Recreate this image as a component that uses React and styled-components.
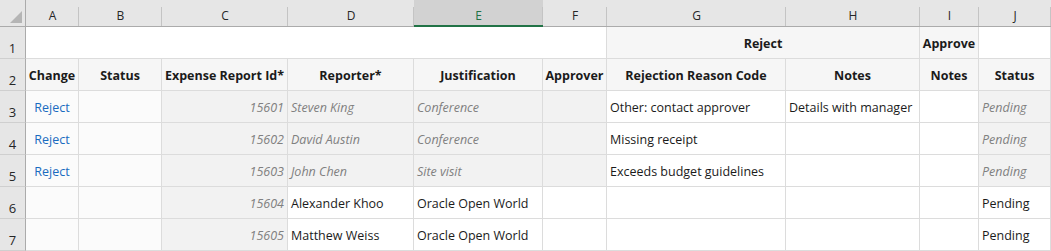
import React from 'react';
import styled, { createGlobalStyle } from 'styled-components';

const FONT = '"Open Sans", "Noto Sans", sans-serif';
const GRID = '#dcdcdc';

const GlobalStyle = createGlobalStyle`
  html, body { margin: 0; padding: 0; background: #ffffff; }
  body { font-family: ${FONT}; }
`;

const COL_WIDTHS = [26, 53, 83, 126, 126, 129, 64, 179, 134, 59, 72];
const LETTERS = ['A', 'B', 'C', 'D', 'E', 'F', 'G', 'H', 'I', 'J'];

const Sheet = styled.div`
  display: grid;
  grid-template-columns: ${COL_WIDTHS.map((w) => `${w}px`).join(' ')};
  grid-template-rows: 27px repeat(7, 32px);
  width: 1051px;
  height: 251px;
  font-family: ${FONT};
  font-size: 12.5px;
  color: #1b1b1b;
  background: #ffffff;
  overflow: hidden;
`;

const Corner = styled.div`
  box-sizing: border-box;
  display: flex;
  align-items: flex-end;
  justify-content: flex-end;
  padding: 0 3px 3px 0;
  background: #e6e6e6;
  border-right: 1px solid #ababab;
  border-bottom: 1px solid #ababab;
`;

const ColHeader = styled.div`
  box-sizing: border-box;
  display: flex;
  align-items: center;
  justify-content: center;
  padding-top: 5px;
  font-size: 12px;
  color: ${(p) => (p.$selected ? '#217346' : '#262626')};
  background:
    linear-gradient(#c4c4c4, #c4c4c4) right 7px / 1px calc(100% - 7px) no-repeat,
    ${(p) => (p.$selected ? '#d2d2d2' : '#e6e6e6')};
  border-bottom: ${(p) => (p.$selected ? '2px solid #217346' : '1px solid #ababab')};
`;

const RowHeader = styled.div`
  box-sizing: border-box;
  display: flex;
  align-items: flex-end;
  justify-content: center;
  padding-bottom: 1px;
  line-height: 17px;
  font-size: 13px;
  color: #262626;
  background: #e6e6e6;
  border-right: 1px solid #ababab;
  border-bottom: 1px solid #cfcfcf;
`;

const Cell = styled.div`
  box-sizing: border-box;
  display: flex;
  align-items: center;
  justify-content: ${(p) =>
    p.$align === 'right' ? 'flex-end' : p.$align === 'center' ? 'center' : 'flex-start'};
  padding: 1px 3px 0 3px;
  white-space: nowrap;
  overflow: hidden;
  grid-column: span ${(p) => p.$span || 1};
  background: ${(p) => p.$bg || '#ffffff'};
  border-right: 1px solid ${GRID};
  border-bottom: 1px solid ${GRID};
  font-weight: ${(p) => (p.$bold ? 700 : 400)};
  font-style: ${(p) => (p.$italic ? 'italic' : 'normal')};
  color: ${(p) => p.$color || '#1b1b1b'};
`;

const Link = styled.span`
  color: #1a6bc0;
`;

const HEAD_BG = '#f6f6f6';
const LOCK_BG = '#f2f2f2';
const SIDE_BG = '#fbfbfb';
const MUTED = '#808080';

const headers = [
  'Change',
  'Status',
  'Expense Report Id*',
  'Reporter*',
  'Justification',
  'Approver',
  'Rejection Reason Code',
  'Notes',
  'Notes',
  'Status',
];

const rows = [
  { n: 3, change: 'Reject', id: '15601', reporter: 'Steven King', just: 'Conference', reason: 'Other: contact approver', notes: 'Details with manager', locked: true },
  { n: 4, change: 'Reject', id: '15602', reporter: 'David Austin', just: 'Conference', reason: 'Missing receipt', notes: '', locked: true },
  { n: 5, change: 'Reject', id: '15603', reporter: 'John Chen', just: 'Site visit', reason: 'Exceeds budget guidelines', notes: '', locked: true },
  { n: 6, change: '', id: '15604', reporter: 'Alexander Khoo', just: 'Oracle Open World', reason: '', notes: '', locked: false },
  { n: 7, change: '', id: '15605', reporter: 'Matthew Weiss', just: 'Oracle Open World', reason: '', notes: '', locked: false },
];

function CornerTriangle() {
  return (
    <svg width="12" height="12" viewBox="0 0 12 12">
      <polygon points="0,12 12,12 12,0" fill="#b5b5b5" />
    </svg>
  );
}

export default function App() {
  return (
    <>
      <GlobalStyle />
      <Sheet>
        <Corner>
          <CornerTriangle />
        </Corner>
        {LETTERS.map((l) => (
          <ColHeader key={l} $selected={l === 'E'}>
            {l}
          </ColHeader>
        ))}

        <RowHeader>1</RowHeader>
        <Cell $span={6} />
        <Cell $span={2} $bg={HEAD_BG} $bold $align="center">Reject</Cell>
        <Cell $bg={HEAD_BG} $bold $align="center">Approve</Cell>
        <Cell />

        <RowHeader>2</RowHeader>
        {headers.map((h, i) => (
          <Cell key={i} $bg={HEAD_BG} $bold $align="center">
            {h}
          </Cell>
        ))}

        {rows.map((r) => {
          const bg = r.locked ? LOCK_BG : '#ffffff';
          const txt = r.locked ? MUTED : '#1b1b1b';
          return (
            <React.Fragment key={r.n}>
              <RowHeader>{r.n}</RowHeader>
              <Cell $bg={SIDE_BG} $align="center">
                {r.change && <Link>{r.change}</Link>}
              </Cell>
              <Cell $bg={SIDE_BG} />
              <Cell $bg={LOCK_BG} $align="right" $italic $color={MUTED}>
                {r.id}
              </Cell>
              <Cell $bg={bg} $italic={r.locked} $color={txt}>
                {r.reporter}
              </Cell>
              <Cell $bg={bg} $italic={r.locked} $color={txt}>
                {r.just}
              </Cell>
              <Cell $bg={bg} />
              <Cell>{r.reason}</Cell>
              <Cell>{r.notes}</Cell>
              <Cell />
              <Cell $bg={bg} $italic={r.locked} $color={txt}>
                Pending
              </Cell>
            </React.Fragment>
          );
        })}
      </Sheet>
    </>
  );
}
